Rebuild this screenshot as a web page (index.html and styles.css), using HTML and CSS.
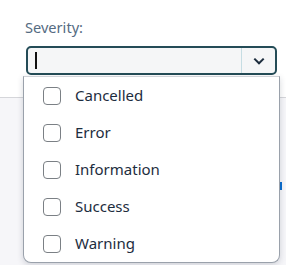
FILE: index.html
```html
<html lang="en">
<head>
    <meta charset="UTF-8">
    <title>Severity</title>
    <link rel="stylesheet" href="styles.css">
</head>
<body>
    <div class="header">
        <label class="label">Severity:</label>
        <div class="combo">
            <div class="combo-input"><span class="caret"></span></div>
            <div class="combo-btn">
                <svg width="14" height="14" viewBox="0 0 14 14"><path d="M2.3 4.6 L7 9.3 L11.7 4.6" fill="none" stroke="#1d2d3e" stroke-width="2"/></svg>
            </div>
        </div>
    </div>
    <div class="content"><span class="peek"></span></div>

    <ul class="popover">
        <li class="item"><span class="box"></span>Cancelled</li>
        <li class="item"><span class="box"></span>Error</li>
        <li class="item"><span class="box"></span>Information</li>
        <li class="item"><span class="box"></span>Success</li>
        <li class="item"><span class="box"></span>Warning</li>
    </ul>
</body>
</html>
```

FILE: styles.css
```css
*{
    margin: 0;
    padding: 0;
    box-sizing: border-box;
}
body{
    width: 286px;
    height: 265px;
    overflow: hidden;
    font-family: "Noto Sans", "Open Sans", sans-serif;
    background-color: #f6f6f9;
    position: relative;
}
.header{
    height: 98px;
    background-color: #fff;
    border-bottom: 1px solid #d5d6da;
    padding: 17px 9px 0 26px;
}
.label{
    display: block;
    font-size: 14.6px;
    line-height: 21px;
    color: #556b82;
    margin-left: -1px;
    margin-bottom: 8px;
}
.combo{
    display: flex;
    height: 29px;
    border: 2px solid #244c57;
    border-radius: 5px;
    background-color: #f5f6f7;
    overflow: hidden;
}
.combo-input{
    flex: 1;
    display: flex;
    align-items: center;
    padding-left: 7px;
}
.caret{
    width: 2px;
    height: 17px;
    background-color: #111;
}
.combo-btn{
    width: 34px;
    display: flex;
    align-items: center;
    justify-content: center;
    border-left: 1px solid #c6dde3;
}
.content{
    height: 167px;
    position: relative;
}
.peek{
    position: absolute;
    right: 4px;
    top: 84px;
    width: 3px;
    height: 8px;
    background-color: #0a6ed1;
}
.popover{
    list-style: none;
    position: absolute;
    left: 23px;
    top: 76px;
    width: 257px;
    height: 187px;
    background-color: #fff;
    border: 1px solid #9aa1ab;
    border-top-color: #d0d3d8;
    border-radius: 0 0 8px 8px;
    box-shadow: 0 2px 6px rgba(30, 40, 60, 0.18);
    z-index: 5;
}
.item{
    height: 37px;
    display: flex;
    align-items: center;
    padding-left: 19px;
    padding-bottom: 2px;
    font-size: 15px;
    color: #1d2d3e;
}
.box{
    width: 18px;
    height: 18px;
    border: 1px solid #7b8085;
    border-radius: 4px;
    margin-right: 14px;
    margin-top: 2px;
    background-color: #fff;
}
```
